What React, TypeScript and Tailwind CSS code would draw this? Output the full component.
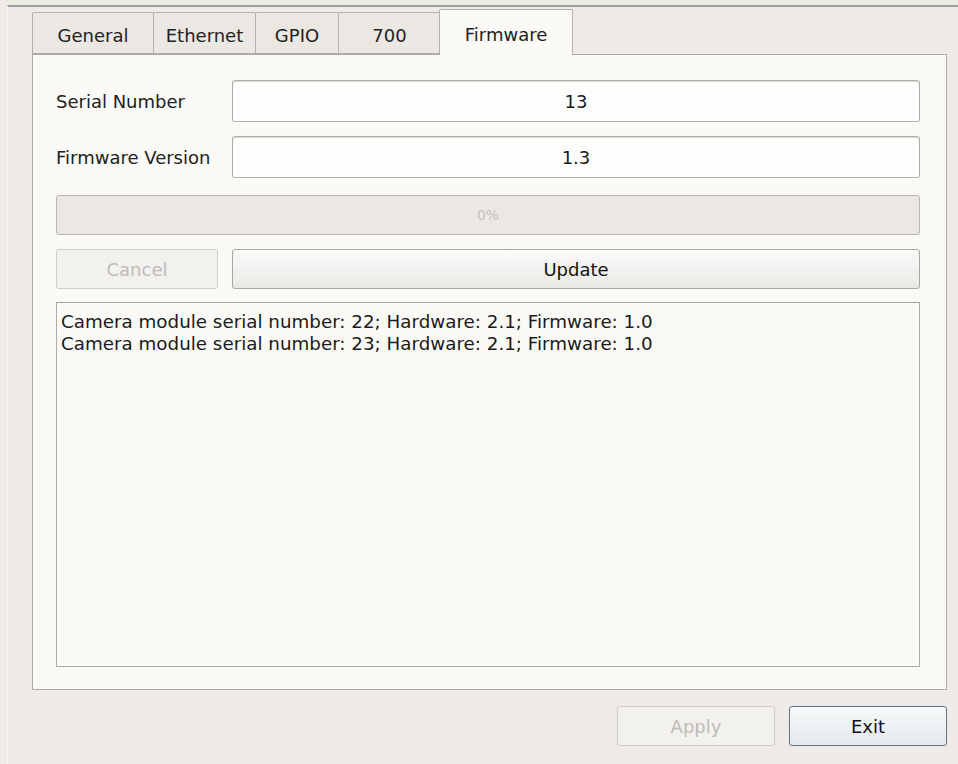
import { useState } from "react";

const TABS = ["General", "Ethernet", "GPIO", "700", "Firmware"] as const;

const TAB_WIDTHS: Record<string, string> = {
  General: "w-[122px]",
  Ethernet: "w-[103px]",
  GPIO: "w-[84px]",
  "700": "w-[103px]",
  Firmware: "w-[134px]",
};

const LOG_LINES = [
  "Camera module serial number: 22; Hardware: 2.1; Firmware: 1.0",
  "Camera module serial number: 23; Hardware: 2.1; Firmware: 1.0",
];

function Field({ label, value }: { label: string; value: string }) {
  return (
    <div className="flex items-center h-[42px]">
      <span className="w-[176px] text-[#222]">{label}</span>
      <div className="flex-1 h-full flex items-center justify-center rounded-[3px] border border-[#adaba7] bg-[#fefefd] shadow-[inset_0_1px_0_#dcdad6]">
        {value}
      </div>
    </div>
  );
}

export default function App() {
  const [active, setActive] = useState<string>("Firmware");

  return (
    <div
      className="w-[958px] h-[764px] bg-[#eeebe6] pt-[5px] pl-[7px] text-[18px] text-[#1a1a1a] overflow-hidden"
      style={{ fontFamily: '"DejaVu Sans", "Liberation Sans", sans-serif' }}
    >
      <div className="h-full flex flex-col border-t-2 border-t-[#9ca1a6] border-l border-l-[#f7f6f4] pl-[24px]">
        {/* tab strip */}
        <div className="flex items-end h-[47px] pt-[3px]">
          {TABS.map((t) => {
            const selected = t === active;
            return (
              <button
                key={t}
                onClick={() => setActive(t)}
                className={[
                  TAB_WIDTHS[t],
                  "flex justify-center border border-[#b3b1ad] rounded-t-[2px] text-[#222]",
                  selected
                    ? "h-[46px] -mb-px pt-[11px] bg-[#fcfaf7] border-b-0 relative z-10 -ml-px"
                    : "h-[42px] pt-[9px] bg-[#ebe8e3] border-b-[#aeaca8] -mr-px",
                ].join(" ")}
              >
                {t}
              </button>
            );
          })}
        </div>

        {/* firmware page */}
        <div className="w-[915px] h-[636px] border border-[#aeaca8] bg-[#fcfaf7] pt-[25px] pl-[23px] pr-[26px] flex flex-col">
          <Field label="Serial Number" value="13" />
          <div className="h-[14px]" />
          <Field label="Firmware Version" value="1.3" />

          <div className="mt-[17px] h-[40px] rounded-[3px] border border-[#b8b6b2] bg-[#ebe8e4] flex items-center justify-center text-[14px] text-[#c4c2be]">
            0%
          </div>

          <div className="mt-[14px] flex h-[40px] gap-[14px]">
            <button className="w-[162px] rounded-[3px] border border-[#cfcdc9] bg-[#f3f1ee] text-[#bdbbb7]">
              Cancel
            </button>
            <button className="flex-1 rounded-[3px] border border-[#a9a7a3] bg-gradient-to-b from-[#fbfaf9] to-[#ebe9e5] text-[#111]">
              Update
            </button>
          </div>

          <div className="mt-[13px] h-[365px] border border-[#aeaca8] border-t-[#a4a29e] bg-[#fcfaf7] pt-[8px] pl-[4px] leading-[22px] text-[18.3px]">
            {LOG_LINES.map((l) => (
              <div key={l}>{l}</div>
            ))}
          </div>
        </div>

        {/* dialog buttons */}
        <div className="w-[915px] flex justify-end gap-[14px] mt-[16px]">
          <button className="w-[158px] h-[40px] rounded-[3px] border border-[#cfcdc9] bg-[#f3f1ee] text-[#bdbbb7]">
            Apply
          </button>
          <button className="w-[158px] h-[40px] rounded-[3px] border border-[#5d7585] bg-gradient-to-b from-[#f7f9fa] to-[#e6e9ec] text-[#111]">
            Exit
          </button>
        </div>
      </div>
    </div>
  );
}
